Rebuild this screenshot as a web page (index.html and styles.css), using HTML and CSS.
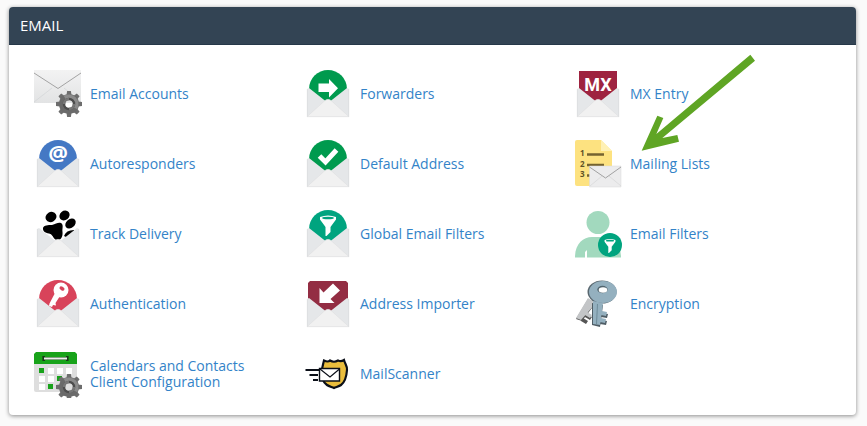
FILE: index.html
```html
<!DOCTYPE html>
<html lang="en">
<head>
<meta charset="utf-8">
<title>Email</title>
<link rel="stylesheet" href="styles.css">
</head>
<body>
<svg class="sprites" aria-hidden="true">
  <defs>
    <linearGradient id="paper" x1="0" y1="0" x2="0" y2="1">
      <stop offset="0" stop-color="#f3f3f3"/><stop offset="1" stop-color="#e2e3e4"/>
    </linearGradient>
    <g id="open-envelope">
      <path fill="#e5e7e9" d="M3 19l2-1 19 15 19-15 2 1v28H3z"/>
      <path fill="none" stroke="#d6d8da" stroke-width=".6" d="M3.300 47V19M44.700 47V19"/>
      <path fill="#f1f1f1" stroke="#dcddde" stroke-width=".5" d="M3 46.700L21 30.500q3-2.500 6 0l18 16.200z"/>
    </g>
    <g id="gear">
      <g fill="#6d6d6d">
        <path id="tooth" d="M-2.500-9l.6-4h3.800l.6 4z"/>
        <use href="#tooth" transform="rotate(45)"/><use href="#tooth" transform="rotate(90)"/>
        <use href="#tooth" transform="rotate(135)"/><use href="#tooth" transform="rotate(180)"/>
        <use href="#tooth" transform="rotate(225)"/><use href="#tooth" transform="rotate(270)"/>
        <use href="#tooth" transform="rotate(315)"/>
      </g>
      <circle r="7.300" fill="none" stroke="#6a6a6a" stroke-width="5.600"/>
      <path fill="none" stroke="#8b8b8b" stroke-width="5" d="M-4-6A7.300 7.300 0 0 1 6 4"/>
      <circle r="5" fill="none" stroke="#4d4d4d" stroke-width="2.500"/>
      <path fill="none" stroke="#777" stroke-width="2.500" d="M-5 0A5 5 0 0 1 0-5M5 0A5 5 0 0 1 0 5"/>
    </g>
    <g id="funnel">
      <path fill="#fff" d="M-8-8q8-3 16 0v2.500L2.500 2v5l-4 4h-1V2L-8-5.500z"/>
      <ellipse cy="-7" rx="6" ry="1.300" fill="#00a47f"/>
    </g>
  </defs>
</svg>

<main class="panel">
  <h1 class="panel-title">EMAIL</h1>
  <ul class="items">
    <li class="item"><a href="#">
      <svg class="icon" viewBox="0 0 48 48" aria-hidden="true">
        <path fill="url(#paper)" d="M0 0h47v33H0z"/>
        <path fill="none" stroke="#cfd1d3" stroke-width=".6" d="M0 32l18-14M47 32L30 18"/>
        <path fill="none" stroke="#a3a3a3" d="M0 3l24 15.500L47 3"/>
        <use href="#gear" x="35" y="34"/>
      </svg><span>Email Accounts</span></a></li>
    <li class="item"><a href="#">
      <svg class="icon" viewBox="0 0 48 48" aria-hidden="true">
        <circle cx="24" cy="19" r="19" fill="#009a4e"/>
        <path fill="#fff" d="M14.500 13.500H25V9l9 9.300-9 9.300V22H14.500z"/>
        <use href="#open-envelope"/>
      </svg><span>Forwarders</span></a></li>
    <li class="item"><a href="#">
      <svg class="icon" viewBox="0 0 48 48" aria-hidden="true">
        <path fill="#9e2340" d="M5 1h38v23L24 33 5 24z"/>
        <text class="mx" x="24" y="21">MX</text>
        <use href="#open-envelope"/>
      </svg><span>MX Entry</span></a></li>

    <li class="item"><a href="#">
      <svg class="icon" viewBox="0 0 48 48" aria-hidden="true">
        <circle cx="24" cy="19" r="19" fill="#4478c4"/>
        <text class="at" x="24" y="21">@</text>
        <use href="#open-envelope"/>
      </svg><span>Autoresponders</span></a></li>
    <li class="item"><a href="#">
      <svg class="icon" viewBox="0 0 48 48" aria-hidden="true">
        <circle cx="24" cy="19" r="19" fill="#009a4e"/>
        <path fill="none" stroke="#fff" stroke-width="5" d="M15.500 16l6 6L32.500 10"/>
        <use href="#open-envelope"/>
      </svg><span>Default Address</span></a></li>
    <li class="item"><a href="#">
      <svg class="icon" viewBox="0 0 48 48" aria-hidden="true">
        <path fill="#fde280" d="M3 0h24l11 11v35H3q-2 0-2-2V2q0-2 2-2z"/>
        <path fill="#fff1b5" d="M27 0l11 11H27z"/>
        <g class="digits"><text x="6" y="16">1</text><text x="6" y="27">2</text><text x="6" y="37">3</text></g>
        <path fill="none" stroke="#75632f" stroke-width="2.400" d="M13 14.500h17M13 25h17M13 35.500h4"/>
        <path fill="#ececed" stroke="#d8d9da" stroke-width=".5" d="M15.500 26H47v21H15.500z"/>
        <path fill="none" stroke="#d2d3d4" stroke-width=".6" d="M16 46l12-10M47 46L35 36"/>
        <path fill="none" stroke="#999" stroke-width=".9" d="M15.500 27L31.500 38 47 27"/>
      </svg><span>Mailing Lists</span></a>
      <svg class="pointer" viewBox="39 39 351 300" aria-hidden="true">
        <path fill="#5fa524" d="M370 44l14 18-278 232 45-9 5 20-112 27 47-105 18 7-21 48z"/>
      </svg></li>

    <li class="item"><a href="#">
      <svg class="icon" viewBox="0 0 48 48" aria-hidden="true">
        <ellipse cx="17" cy="7" rx="5.600" ry="5" transform="rotate(-30 17 7)"/>
        <ellipse cx="30.500" cy="5.500" rx="5.400" ry="4.600" transform="rotate(-40 30.500 5.500)"/>
        <ellipse cx="36.500" cy="13.500" rx="5.800" ry="4.300" transform="rotate(-40 36.500 13.500)"/>
        <path d="M30 26q2-6 10-6 1 5-6 8zM9 18c1-3 5-3 9-3 4-1 6-3 9-2 3 2 1 5 1.500 9 .5 5-2 9-6 8-3-1-3-4-6-6-4-1-8-2-7.500-6z"/>
        <use href="#open-envelope"/>
      </svg><span>Track Delivery</span></a></li>
    <li class="item"><a href="#">
      <svg class="icon" viewBox="0 0 48 48" aria-hidden="true">
        <circle cx="24" cy="19" r="19" fill="#00a47f"/>
        <use href="#funnel" x="24" y="15"/>
        <use href="#open-envelope"/>
      </svg><span>Global Email Filters</span></a></li>
    <li class="item"><a href="#">
      <svg class="icon" viewBox="0 0 48 48" aria-hidden="true">
        <g fill="#a2d9be"><circle cx="24" cy="12.500" r="11.500"/>
        <path d="M1 47.500C1 34 9 27 18 27h12c9 0 17 7 17 20.500H13V40l-2 2v5.500z"/></g>
        <circle cx="36" cy="35" r="12" fill="#00a47f"/>
        <use href="#funnel" transform="translate(36 35.500) scale(.68)"/>
      </svg><span>Email Filters</span></a></li>

    <li class="item"><a href="#">
      <svg class="icon" viewBox="0 0 48 48" aria-hidden="true">
        <circle cx="24" cy="19" r="19" fill="#d8435a"/>
        <circle cx="27" cy="10" r="7.500" fill="#fff"/>
        <ellipse cx="28" cy="8.500" rx="2.800" ry="1.800" transform="rotate(35 28 8.500)" fill="#d8435a"/>
        <path fill="#fff" d="M21 13l5 3-4.500 7 .5 2.500-3-.5-1 2-3-1 .5-2.500z"/>
        <use href="#open-envelope"/>
      </svg><span>Authentication</span></a></li>
    <li class="item"><a href="#">
      <svg class="icon" viewBox="0 0 48 48" aria-hidden="true">
        <path fill="#932d43" d="M6 1h36l2 2v21L24 33 4 24V3z"/>
        <path fill="#fff" d="M29 3.500l7 7-9.500 8.500 4 4H15.500V8l4 4.500z"/>
        <use href="#open-envelope"/>
      </svg><span>Address Importer</span></a></li>
    <li class="item"><a href="#">
      <svg class="icon" viewBox="0 0 48 48" aria-hidden="true">
        <path fill="#555" d="M14 19l7 5L8 41l-6-2zM13 34l5 3-2 3-5-3zM9 38l5 3-2 3-5-3z"/>
        <path fill="#c3c5c7" d="M14 18l8 5L7 40l-5-2zM13 32l5 3-2 3-5-3z"/>
        <path fill="#4f5d65" d="M18 23l11 2-3 22-8-2zM28 33l6 1-1 4-6-1zM27 40l6 1-1 4-6-1z"/>
        <ellipse cx="28" cy="12" rx="14.500" ry="11.500" fill="#59676f"/>
        <ellipse cx="29" cy="12" rx="14" ry="11" fill="#94b0bf"/>
        <path fill="#94b0bf" d="M19 21l10 2-3 22-7-1zM28 31l5 1-1 4-5-1zM27 38l5 1-1 4-5-1z"/>
        <path fill="#6e8b99" d="M23 24h1l-1 20h-1z"/>
        <ellipse cx="28.500" cy="9.500" rx="5.200" ry="3.700" fill="#53656e"/>
        <ellipse cx="29" cy="10" rx="4.300" ry="2.700" fill="#fff"/>
      </svg><span>Encryption</span></a></li>

    <li class="item"><a href="#">
      <svg class="icon" viewBox="0 0 48 48" aria-hidden="true">
        <path fill="#dedede" d="M0 10h43v32H2q-2 0-2-2z"/>
        <path fill="#18a31a" d="M2 2h39l2 2v10H0V4z"/>
        <path fill="none" stroke="#173b18" stroke-width="2.600" d="M9 8.500h25M9.700 6v5M33.300 6v5"/>
        <path stroke="#eee" stroke-width="2" d="M10 8.500h23"/>
        <path fill="#fff" d="M14 18h6v6h-6zM23 18h6v6h-6zM32 18h6v6h-6zM5 26h6v6H5zM14 26h6v6h-6zM5 34h6v6H5z"/>
        <path fill="#18a31a" d="M5 18h5v5H5zM23 26h5v5h-5zM14 34h5v5h-5z"/>
        <use href="#gear" x="35" y="37"/>
      </svg><span>Calendars and Contacts<br>Client Configuration</span></a></li>
    <li class="item"><a href="#">
      <svg class="icon" viewBox="0 0 48 48" aria-hidden="true">
        <path fill="#eabd3c" stroke="#0b0f18" stroke-width="2.200" d="M20 10.500q4 2 6 0 4 2.500 8 0 3 1.500 6-.5c1 4 3.500 6 3 10-.5 7-2 12-6 15-2 1.500-5 2-7 3-2-1-5-1.500-7-3-4-3-6-8-5-14 0-4 1-6 2-10.500z"/>
        <path fill="#fff" stroke="#0b0f18" stroke-width="1.400" d="M15.500 18.500h20v12.500h-20z"/>
        <path fill="none" stroke="#0b0f18" stroke-width="1.200" d="M16 19l10 8 9.500-8"/>
        <path stroke="#0b0f18" stroke-width="2" d="M1.500 20H15M5.500 25H14M9 30h5"/>
      </svg><span>MailScanner</span></a></li>
  </ul>
</main>
</body>
</html>
```
FILE: styles.css
```css
* {
  box-sizing: border-box;
}

body {
  margin: 0;
  padding: 7px 11px 11px 9px;
  background: #fafafa;
  font: 14px/16px "Open Sans", "Noto Sans", sans-serif;
}

.sprites {
  position: absolute;
  width: 0;
  height: 0;
}

.panel {
  background: #fff;
  border-radius: 4px;
  box-shadow: 0 1px 4px rgba(0, 0, 0, 0.45);
}

.panel-title {
  margin: 0;
  padding: 10px 11px;
  border-bottom: 1px solid #263849;
  border-radius: 4px 4px 0 0;
  background: #334454;
  color: #fff;
  font-size: 15px;
  font-weight: 400;
  line-height: 17px;
}

.items {
  display: grid;
  grid-template-columns: repeat(3, 1fr);
  row-gap: 22px;
  margin: 0;
  padding: 25px 12px 17px 25px;
  list-style: none;
}

.item {
  position: relative;
}

.item a {
  display: flex;
  align-items: center;
  gap: 8px;
  color: #3383c8;
  text-decoration: none;
}

.item a:hover {
  text-decoration: underline;
}

.icon {
  flex: none;
  width: 48px;
  height: 48px;
}

.mx,
.at {
  fill: #fff;
  font-weight: 700;
  text-anchor: middle;
}

.mx {
  font-family: Roboto, "Open Sans", sans-serif;
  font-size: 18px;
}

.at {
  font-size: 22px;
}

.digits {
  fill: #5f5127;
  font-size: 8px;
  font-weight: 700;
}

.pointer {
  position: absolute;
  top: -87px;
  left: 66px;
  width: 117px;
  height: 100px;
  pointer-events: none;
}
```
